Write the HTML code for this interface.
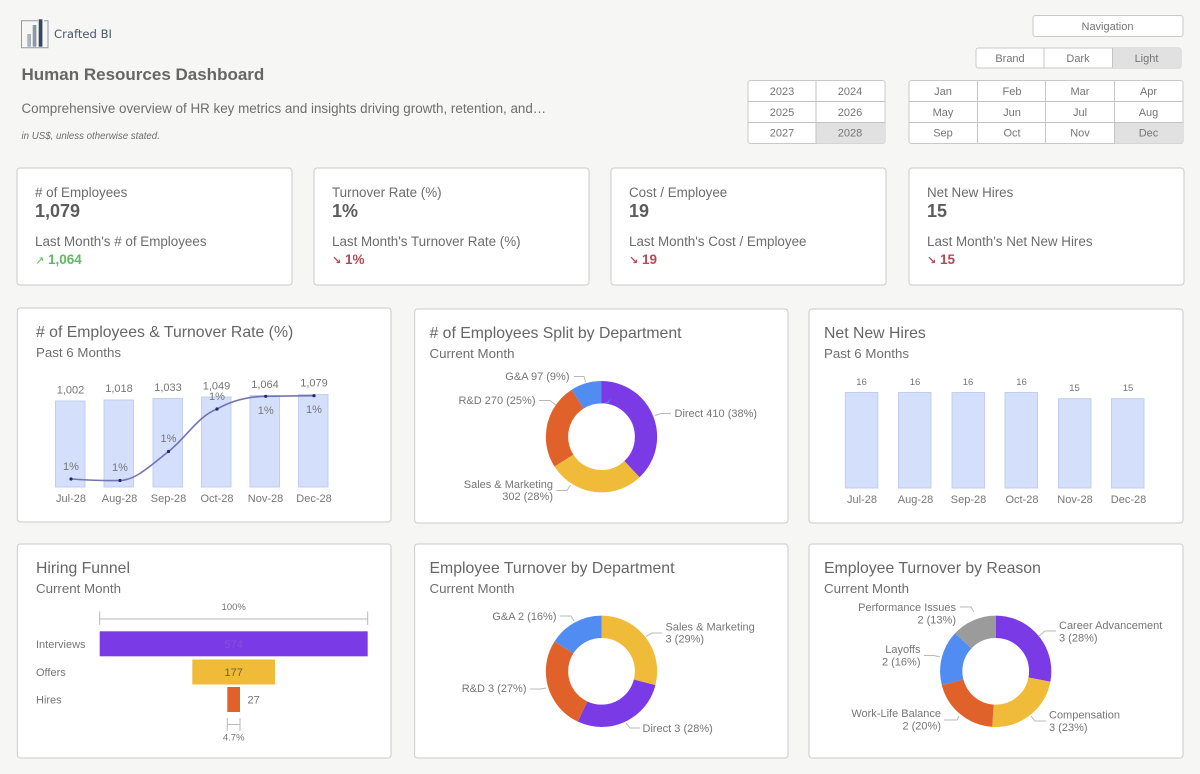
<!DOCTYPE html>
<html lang="en">
<head>
<meta charset="utf-8">
<title>Human Resources Dashboard</title>
<style>
html,body{margin:0;padding:0;background:#f6f6f5;}
svg{display:block;}
text{font-family:"Liberation Sans",sans-serif;fill:#6e6e6e;}
.card{fill:#fff;stroke:#cbcbcb;stroke-width:1;}
.btn{font-size:11px;text-anchor:middle;fill:#757575;}
.ct{font-size:15.8px;fill:#666;}
.cs{font-size:13.3px;fill:#6e6e6e;}
.kl{font-size:13.4px;fill:#6c6c6c;}
.kv{font-size:18px;font-weight:bold;fill:#5c5c5c;}
.up{font-size:13.5px;font-weight:bold;fill:#62b962;}
.dn{font-size:13.5px;font-weight:bold;fill:#b34a55;}
.ar{font-family:"DejaVu Sans",sans-serif;font-size:11px;}
.l{font-size:11px;fill:#767676;}
.m{text-anchor:middle;}
.e{text-anchor:end;}
.s{font-size:9.5px;}
.bar{fill:#d3dffb;stroke:#c2cfee;stroke-width:1;}
.ld{fill:none;stroke:#b8b8b8;stroke-width:1;}
.grid{stroke:#c4c4c4;stroke-width:1;fill:none;}
.box{fill:#fff;stroke:#c9c9c9;stroke-width:1;}
.sel{fill:#e1e1e1;}
circle.d{fill:none;stroke-width:22.3;}
</style>
</head>
<body>
<svg width="1200" height="774" viewBox="0 0 1200 774" xmlns="http://www.w3.org/2000/svg">
<rect width="1200" height="774" fill="#f6f6f5"/>

<!-- logo -->
<path d="M38 20.7H21.5V47.7H48V20.7H44" fill="none" stroke="#8f9aa6" stroke-width="1"/>
<rect x="27.3" y="34" width="3.7" height="12.7" fill="#aab2ba"/>
<rect x="32.7" y="25" width="3.7" height="21.7" fill="#8d98a3"/>
<rect x="38.7" y="19.3" width="3.7" height="27.4" fill="#34495e"/>
<text x="54" y="38" style="font-family:'DejaVu Sans',sans-serif;font-size:11.6px;fill:#465768">Crafted BI</text>

<text x="21.5" y="80" style="font-size:17px;font-weight:bold;fill:#666">Human Resources Dashboard</text>
<text x="21.5" y="113" style="font-size:13.4px;fill:#6e6e6e">Comprehensive overview of HR key metrics and insights driving growth, retention, and…</text>
<text x="21.5" y="139" style="font-size:9.7px;font-style:italic;fill:#6e6e6e">in US$, unless otherwise stated.</text>

<!-- nav -->
<rect class="box" x="1033" y="15.5" width="150" height="21" rx="2.5"/>
<text class="btn" x="1107.5" y="30">Navigation</text>

<rect class="box" x="976" y="48" width="205" height="20" rx="2.5"/>
<path class="sel" d="M1112.5 48H1178.5a2.5 2.5 0 0 1 2.5 2.5V65.5a2.5 2.5 0 0 1-2.5 2.5H1112.5Z"/>
<path class="grid" d="M1044 48V68M1112.5 48V68"/>
<text class="btn" x="1010" y="62">Brand</text>
<text class="btn" x="1078" y="62">Dark</text>
<text class="btn" x="1146.5" y="62">Light</text>

<rect class="box" x="748" y="80.5" width="137" height="63" rx="2.5"/>
<path class="sel" d="M816 122.5H885V141a2.5 2.5 0 0 1-2.5 2.5H816Z"/>
<path class="grid" d="M816 80.5V143.5M748 101.5H885M748 122.5H885"/>
<text class="btn" x="782" y="95">2023</text><text class="btn" x="850" y="95">2024</text>
<text class="btn" x="782" y="116">2025</text><text class="btn" x="850" y="116">2026</text>
<text class="btn" x="782" y="136.5">2027</text><text class="btn" x="850" y="136.5">2028</text>

<rect class="box" x="909" y="80.5" width="274" height="63" rx="2.5"/>
<path class="sel" d="M1114.5 122.5H1183V141a2.5 2.5 0 0 1-2.5 2.5H1114.5Z"/>
<path class="grid" d="M977.5 80.5V143.5M1045.5 80.5V143.5M1114.5 80.5V143.5M909 101.5H1183M909 122.5H1183"/>
<text class="btn" x="943" y="95">Jan</text><text class="btn" x="1012" y="95">Feb</text><text class="btn" x="1080" y="95">Mar</text><text class="btn" x="1148.5" y="95">Apr</text>
<text class="btn" x="943" y="116">May</text><text class="btn" x="1012" y="116">Jun</text><text class="btn" x="1080" y="116">Jul</text><text class="btn" x="1148.5" y="116">Aug</text>
<text class="btn" x="943" y="136.5">Sep</text><text class="btn" x="1012" y="136.5">Oct</text><text class="btn" x="1080" y="136.5">Nov</text><text class="btn" x="1148.5" y="136.5">Dec</text>

<!-- KPI cards -->
<rect class="card" x="17" y="168" width="275" height="117" rx="3"/>
<text class="kl" x="35" y="197"># of Employees</text>
<text class="kv" x="35" y="217">1,079</text>
<text class="kl" x="35" y="246">Last Month's # of Employees</text>
<text class="up" x="35" y="264"><tspan class="ar" style="font-weight:normal;fill:#62b962">↗</tspan> 1,064</text>

<rect class="card" x="314" y="168" width="275" height="117" rx="3"/>
<text class="kl" x="332" y="197">Turnover Rate (%)</text>
<text class="kv" x="332" y="217">1%</text>
<text class="kl" x="332" y="246">Last Month's Turnover Rate (%)</text>
<text class="dn" x="332" y="264"><tspan class="ar" style="fill:#b34a55">↘</tspan> 1%</text>

<rect class="card" x="611" y="168" width="275" height="117" rx="3"/>
<text class="kl" x="629" y="197">Cost / Employee</text>
<text class="kv" x="629" y="217">19</text>
<text class="kl" x="629" y="246">Last Month's Cost / Employee</text>
<text class="dn" x="629" y="264"><tspan class="ar" style="fill:#b34a55">↘</tspan> 19</text>

<rect class="card" x="909" y="168" width="275" height="117" rx="3"/>
<text class="kl" x="927" y="197">Net New Hires</text>
<text class="kv" x="927" y="217">15</text>
<text class="kl" x="927" y="246">Last Month's Net New Hires</text>
<text class="dn" x="927" y="264"><tspan class="ar" style="fill:#b34a55">↘</tspan> 15</text>

<!-- Chart 1 -->
<rect class="card" x="17.3" y="308" width="373.7" height="214" rx="3"/>
<text class="ct" x="36" y="337"># of Employees &amp; Turnover Rate (%)</text>
<text class="cs" x="36" y="357">Past 6 Months</text>
<rect class="bar" x="55.5" y="401" width="29.5" height="86"/>
<rect class="bar" x="104" y="400" width="29.5" height="87"/>
<rect class="bar" x="153" y="398.5" width="29.5" height="88.5"/>
<rect class="bar" x="201.5" y="397" width="29.5" height="90"/>
<rect class="bar" x="250" y="395.5" width="29.5" height="91.5"/>
<rect class="bar" x="298.5" y="394.5" width="29.5" height="92.5"/>
<text class="l m" x="70.5" y="393.5">1,002</text>
<text class="l m" x="119" y="392">1,018</text>
<text class="l m" x="168" y="391">1,033</text>
<text class="l m" x="216.5" y="389.5">1,049</text>
<text class="l m" x="265" y="388">1,064</text>
<text class="l m" x="314" y="386.5">1,079</text>
<path d="M71 479C87 480 104 481 120 480.5C136 480 150 466 168.5 451.5C187 437 197 417 217 409C233 400 250 396.5 265.7 396.3C282 396 298 396 314 395.7" fill="none" stroke="#7275b0" stroke-width="1.6"/>
<g fill="#23286e">
<circle cx="71" cy="479" r="1.6"/><circle cx="120" cy="480.5" r="1.6"/><circle cx="168.5" cy="451.5" r="1.6"/><circle cx="217" cy="409" r="1.6"/><circle cx="265.7" cy="396.3" r="1.6"/><circle cx="314" cy="395.7" r="1.6"/>
</g>
<text class="l m" x="71" y="470">1%</text>
<text class="l m" x="120" y="471">1%</text>
<text class="l m" x="168.5" y="442">1%</text>
<text class="l m" x="217" y="400">1%</text>
<text class="l m" x="265.7" y="414">1%</text>
<text class="l m" x="314" y="413">1%</text>
<text class="l m" x="71" y="502">Jul-28</text>
<text class="l m" x="119.5" y="502">Aug-28</text>
<text class="l m" x="168.5" y="502">Sep-28</text>
<text class="l m" x="217" y="502">Oct-28</text>
<text class="l m" x="265.5" y="502">Nov-28</text>
<text class="l m" x="314" y="502">Dec-28</text>

<!-- Chart 2 -->
<rect class="card" x="414.6" y="309" width="373.4" height="214" rx="3"/>
<text class="ct" x="429.5" y="338"># of Employees Split by Department</text>
<text class="cs" x="429.5" y="358">Current Month</text>
<path class="ld" d="M574 376.5H584L585.5 382M539 400.500H550L556 405M655 415.500L661 413.500H671M556.500 490.500H567L570.500 485"/>
<g transform="rotate(-90 601.5 436.7)">
<circle class="d" cx="601.5" cy="436.7" r="44.5" pathLength="100" stroke="#7a3be6" stroke-dasharray="38 62" stroke-dashoffset="0"/>
<circle class="d" cx="601.5" cy="436.7" r="44.5" pathLength="100" stroke="#efbb38" stroke-dasharray="28 72" stroke-dashoffset="-38"/>
<circle class="d" cx="601.5" cy="436.7" r="44.5" pathLength="100" stroke="#e0622a" stroke-dasharray="25 75" stroke-dashoffset="-66"/>
<circle class="d" cx="601.5" cy="436.7" r="44.5" pathLength="100" stroke="#518cf3" stroke-dasharray="9 91" stroke-dashoffset="-91"/>
</g>
<text class="l e" x="569.5" y="380">G&amp;A 97 (9%)</text>
<text class="l e" x="535.5" y="404">R&amp;D 270 (25%)</text>
<text class="l" x="674.5" y="417">Direct 410 (38%)</text>
<text class="l e" x="553" y="488">Sales &amp; Marketing</text>
<text class="l e" x="553" y="500">302 (28%)</text>

<!-- Chart 3 -->
<rect class="card" x="809" y="309" width="374" height="214" rx="3"/>
<text class="ct" x="824" y="338">Net New Hires</text>
<text class="cs" x="824" y="358">Past 6 Months</text>
<rect class="bar" x="845.3" y="392.5" width="32.5" height="95.5"/>
<rect class="bar" x="898.5" y="392.5" width="32.5" height="95.5"/>
<rect class="bar" x="952" y="392.5" width="32.5" height="95.5"/>
<rect class="bar" x="1005" y="392.5" width="32.5" height="95.5"/>
<rect class="bar" x="1058.5" y="398.7" width="32.5" height="89.3"/>
<rect class="bar" x="1111.5" y="398.7" width="32.5" height="89.3"/>
<text class="l s m" x="861.5" y="385">16</text>
<text class="l s m" x="915" y="385">16</text>
<text class="l s m" x="968" y="385">16</text>
<text class="l s m" x="1021.5" y="385">16</text>
<text class="l s m" x="1074.5" y="391">15</text>
<text class="l s m" x="1128" y="391">15</text>
<text class="l m" x="862" y="503">Jul-28</text>
<text class="l m" x="915.5" y="503">Aug-28</text>
<text class="l m" x="968.5" y="503">Sep-28</text>
<text class="l m" x="1022" y="503">Oct-28</text>
<text class="l m" x="1075" y="503">Nov-28</text>
<text class="l m" x="1128.5" y="503">Dec-28</text>

<!-- Chart 4 funnel -->
<rect class="card" x="17.3" y="544" width="373.7" height="214" rx="3"/>
<text class="ct" x="36" y="573">Hiring Funnel</text>
<text class="cs" x="36" y="593">Current Month</text>
<text class="l s m" x="233.7" y="610">100%</text>
<path d="M99.7 611.5V625M367.7 611.5V625M99.7 619H367.7" fill="none" stroke="#b8b8b8" stroke-width="1"/>
<rect x="99.7" y="631.3" width="268" height="25" fill="#7a3be6"/>
<rect x="192.3" y="659.5" width="82.7" height="25" fill="#efbb38"/>
<rect x="227.3" y="687" width="12.7" height="25" fill="#e0622a"/>
<text class="l" x="36" y="648">Interviews</text>
<text class="l" x="36" y="676">Offers</text>
<text class="l" x="36" y="703.5">Hires</text>
<text class="l m" x="233.7" y="648" style="fill:#8253d4">574</text>
<text class="l m" x="233.7" y="676" style="fill:#6f6233">177</text>
<text class="l" x="247.5" y="703.5">27</text>
<path d="M227.3 718V731M240 718V731M227.3 724.5H240" fill="none" stroke="#b8b8b8" stroke-width="1"/>
<text class="l s m" x="233.7" y="740.5">4.7%</text>

<!-- Chart 5 -->
<rect class="card" x="414.6" y="544" width="373.4" height="214" rx="3"/>
<text class="ct" x="429.5" y="573">Employee Turnover by Department</text>
<text class="cs" x="429.5" y="593">Current Month</text>
<path class="ld" d="M560 616H571L574 621M646 636.500L652 633H662M530 689H541L546 688M626 723L630 728H640"/>
<g transform="rotate(-90 601.5 671.3)">
<circle class="d" cx="601.5" cy="671.3" r="44.5" pathLength="100" stroke="#efbb38" stroke-dasharray="29 71" stroke-dashoffset="0"/>
<circle class="d" cx="601.5" cy="671.3" r="44.5" pathLength="100" stroke="#7a3be6" stroke-dasharray="28 72" stroke-dashoffset="-29"/>
<circle class="d" cx="601.5" cy="671.3" r="44.5" pathLength="100" stroke="#e0622a" stroke-dasharray="27 73" stroke-dashoffset="-57"/>
<circle class="d" cx="601.5" cy="671.3" r="44.5" pathLength="100" stroke="#518cf3" stroke-dasharray="16 84" stroke-dashoffset="-84"/>
</g>
<text class="l e" x="556.5" y="620">G&amp;A 2 (16%)</text>
<text class="l e" x="526.5" y="692">R&amp;D 3 (27%)</text>
<text class="l" x="665.5" y="630.5">Sales &amp; Marketing</text>
<text class="l" x="665.5" y="642.5">3 (29%)</text>
<text class="l" x="642.5" y="732">Direct 3 (28%)</text>

<!-- Chart 6 -->
<rect class="card" x="809" y="544" width="374" height="214" rx="3"/>
<text class="ct" x="824" y="573">Employee Turnover by Reason</text>
<text class="cs" x="824" y="593">Current Month</text>
<path class="ld" d="M960 607H971L974 612M924 655.500H934L940 657M1039 636L1045 631H1056M944 720H957L959 716M1031 716L1035 721H1046"/>
<g transform="rotate(-90 995.7 671.3)">
<circle class="d" cx="995.7" cy="671.3" r="44.5" pathLength="100" stroke="#7a3be6" stroke-dasharray="28 72" stroke-dashoffset="0"/>
<circle class="d" cx="995.7" cy="671.3" r="44.5" pathLength="100" stroke="#efbb38" stroke-dasharray="23 77" stroke-dashoffset="-28"/>
<circle class="d" cx="995.7" cy="671.3" r="44.5" pathLength="100" stroke="#e0622a" stroke-dasharray="20 80" stroke-dashoffset="-51"/>
<circle class="d" cx="995.7" cy="671.3" r="44.5" pathLength="100" stroke="#518cf3" stroke-dasharray="16 84" stroke-dashoffset="-71"/>
<circle class="d" cx="995.7" cy="671.3" r="44.5" pathLength="100" stroke="#9b9b9b" stroke-dasharray="13 87" stroke-dashoffset="-87"/>
</g>
<text class="l e" x="956" y="611">Performance Issues</text>
<text class="l e" x="956" y="623.5">2 (13%)</text>
<text class="l e" x="920.5" y="653">Layoffs</text>
<text class="l e" x="920.5" y="665.5">2 (16%)</text>
<text class="l e" x="941" y="717">Work-Life Balance</text>
<text class="l e" x="941" y="729.5">2 (20%)</text>
<text class="l" x="1059" y="629">Career Advancement</text>
<text class="l" x="1059" y="641.5">3 (28%)</text>
<text class="l" x="1049" y="718.5">Compensation</text>
<text class="l" x="1049" y="731">3 (23%)</text>
</svg>
</body>
</html>
